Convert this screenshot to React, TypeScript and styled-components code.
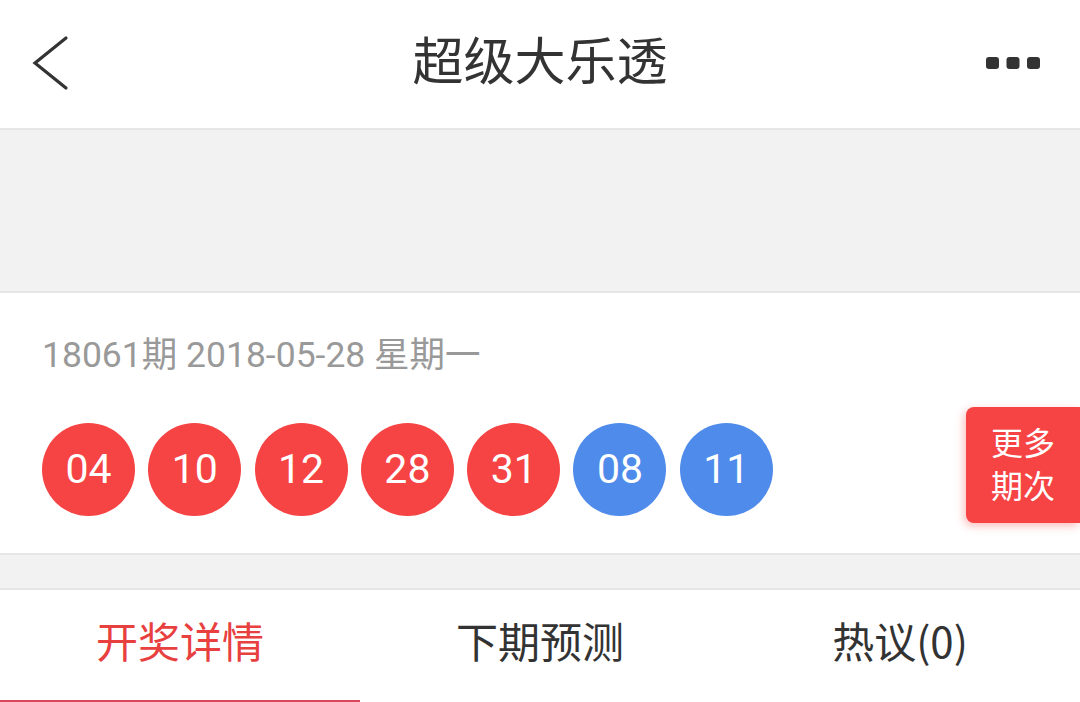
import React from "react";
import styled, { createGlobalStyle } from "styled-components";

const GlobalStyle = createGlobalStyle`
  html, body {
    margin: 0;
    padding: 0;
    background: #f2f2f2;
    font-family: Roboto, "Noto Sans CJK SC", sans-serif;
  }
  * {
    box-sizing: border-box;
  }
`;

const Page = styled.div`
  width: 1080px;
  height: 702px;
  overflow: hidden;
  display: flex;
  flex-direction: column;
  background: #f2f2f2;
`;

const Header = styled.header`
  height: 130px;
  flex-shrink: 0;
  background: #fff;
  border-bottom: 2px solid #e6e6e6;
  display: flex;
  align-items: center;
  justify-content: space-between;
  padding: 0 40px 0 30px;
  position: relative;
`;

const Title = styled.h1`
  position: absolute;
  left: 0;
  right: 0;
  top: 27px;
  margin: 0;
  text-align: center;
  font-family: "Noto Sans CJK SC", sans-serif;
  font-weight: 400;
  font-size: 51px;
  line-height: 62px;
  color: #333;
  pointer-events: none;
`;

const IconButton = styled.button`
  border: 0;
  background: transparent;
  padding: 0;
  display: flex;
  align-items: center;
  margin-top: -2px;
`;

const Spacer = styled.div<{ $height: number }>`
  height: ${(p) => p.$height}px;
  flex-shrink: 0;
  background: #f2f2f2;
  border-bottom: 2px solid #e6e6e6;
`;

const Card = styled.section`
  height: 262px;
  flex-shrink: 0;
  background: #fff;
  border-bottom: 2px solid #e6e6e6;
  padding: 40px 0 0 42px;
  display: flex;
  flex-direction: column;
`;

const DateLine = styled.div`
  font-size: 35.5px;
  line-height: 44px;
  color: #999;
  font-family: Roboto, "Noto Sans CJK SC", sans-serif;
`;

const BallRow = styled.div`
  margin-top: 38px;
  display: flex;
  align-items: center;
  justify-content: space-between;
`;

const Balls = styled.div`
  display: flex;
  gap: 13.3px;
`;

const Ball = styled.span<{ $color: string }>`
  width: 93px;
  height: 93px;
  border-radius: 50%;
  background: ${(p) => p.$color};
  color: #fff;
  font-family: Roboto, sans-serif;
  font-size: 41px;
  display: flex;
  align-items: center;
  justify-content: center;
`;

const MoreButton = styled.button`
  width: 114px;
  height: 116px;
  margin-top: -8px;
  border: 0;
  border-radius: 8px 0 0 8px;
  background: #f64343;
  color: #fff;
  font-family: "Noto Sans CJK SC", sans-serif;
  font-size: 32px;
  line-height: 43px;
  padding: 0 0 4px 0;
  box-shadow: -2px 3px 8px rgba(246, 67, 67, 0.35);
  display: flex;
  flex-direction: column;
  align-items: center;
  justify-content: center;
`;

const Tabs = styled.nav`
  flex: 1;
  background: #fff;
  display: grid;
  grid-template-columns: repeat(3, 1fr);
`;

const Tab = styled.div<{ $active?: boolean }>`
  height: 112px;
  padding-top: 25px;
  text-align: center;
  font-family: "Noto Sans CJK SC", sans-serif;
  font-size: 42px;
  line-height: 50px;
  color: ${(p) => (p.$active ? "#e8403f" : "#333")};
  border-bottom: 2px solid ${(p) => (p.$active ? "#d8485a" : "transparent")};
`;

const BackIcon = () => (
  <svg width="40" height="56" viewBox="0 0 40 56">
    <polyline
      points="36,3 5,28 36,53"
      fill="none"
      stroke="#333"
      strokeWidth="3.2"
      strokeLinecap="round"
      strokeLinejoin="miter"
    />
  </svg>
);

const MoreIcon = () => (
  <svg width="54" height="14" viewBox="0 0 54 14">
    <rect x="0" y="1" width="13" height="12" rx="3" fill="#333" />
    <rect x="20.5" y="1" width="13" height="12" rx="3" fill="#333" />
    <rect x="41" y="1" width="13" height="12" rx="3" fill="#333" />
  </svg>
);

const red = ["04", "10", "12", "28", "31"];
const blue = ["08", "11"];

export default function App() {
  return (
    <>
      <GlobalStyle />
      <Page>
        <Header>
          <IconButton aria-label="返回">
            <BackIcon />
          </IconButton>
          <Title>超级大乐透</Title>
          <IconButton aria-label="更多">
            <MoreIcon />
          </IconButton>
        </Header>
        <Spacer $height={163} />
        <Card>
          <DateLine>18061期 2018-05-28 星期一</DateLine>
          <BallRow>
            <Balls>
              {red.map((n, i) => (
                <Ball key={"r" + i} $color="#f64343">
                  {n}
                </Ball>
              ))}
              {blue.map((n, i) => (
                <Ball key={"b" + i} $color="#4f8bea">
                  {n}
                </Ball>
              ))}
            </Balls>
            <MoreButton>
              <span>更多</span>
              <span>期次</span>
            </MoreButton>
          </BallRow>
        </Card>
        <Spacer $height={35} />
        <Tabs>
          <Tab $active>开奖详情</Tab>
          <Tab>下期预测</Tab>
          <Tab>热议(0)</Tab>
        </Tabs>
      </Page>
    </>
  );
}
